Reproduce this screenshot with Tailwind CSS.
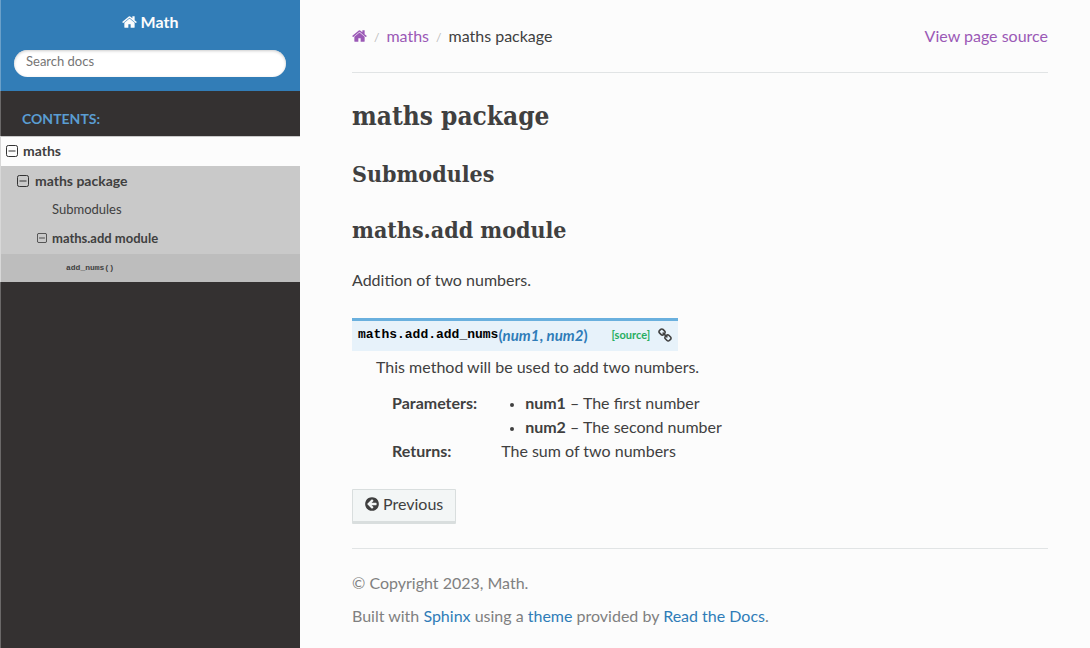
<!DOCTYPE html>
<html lang="en">
<head>
<meta charset="utf-8">
<meta name="viewport" content="width=device-width, initial-scale=1">
<title>maths package — Math documentation</title>
<script src="https://cdn.jsdelivr.net/npm/@tailwindcss/browser@4"></script>
</head>
<body class="bg-[#fcfcfc] font-['Lato',sans-serif] text-base leading-6 text-[#404040]">
<svg class="hidden" aria-hidden="true">
  <symbol id="home" viewBox="64 0 1664 1792"><path d="M1472 992v480q0 26-19 45t-45 19h-384v-384h-256v384h-384q-26 0-45-19t-19-45v-480q0-1 .5-3t.5-3l575-474 575 474q1 2 1 6zm223-69l-62 74q-8 9-21 11h-3q-13 0-21-7l-692-577-692 577q-12 8-24 7-13-2-21-11l-62-74q-8-10-7-23.5t11-21.5l719-599q32-26 76-26t76 26l244 204v-195q0-14 9-23t23-9h192q14 0 23 9t9 23v408l219 182q10 8 11 21.5t-7 23.5z"/></symbol>
  <symbol id="minus" viewBox="0 0 12 12"><rect x=".5" y=".5" width="11" height="11" rx="1.8" fill="none" stroke="currentColor"/><path d="M2.5 6h7" stroke="currentColor"/></symbol>
  <symbol id="link" viewBox="64 0 1664 1792"><path d="M1520 1216q0-40-28-68l-208-208q-28-28-68-28-42 0-72 32 3 3 19 18.5t21.5 21.5 15 19 13 25.5 3.5 27.5q0 40-28 68t-68 28q-15 0-27.5-3.5t-25.5-13-19-15-21.5-21.5-18.5-19q-33 31-33 73 0 40 28 68l206 207q27 27 68 27 40 0 68-26l147-146q28-28 28-67zm-703-705q0-40-28-68l-206-207q-28-28-68-28-39 0-68 27l-147 146q-28 28-28 67 0 40 28 68l208 208q27 27 68 27 42 0 72-31-3-3-19-18.5t-21.5-21.5-15-19-13-25.5-3.5-27.5q0-40 28-68t68-28q15 0 27.5 3.5t25.5 13 19 15 21.5 21.5 18.5 19q33-31 33-73zm895 705q0 120-85 203l-147 146q-83 83-203 83-121 0-204-85l-206-207q-83-83-83-203 0-123 88-209l-88-88q-86 88-208 88-120 0-204-84l-208-208q-84-84-84-204t85-203l147-146q83-83 203-83 121 0 204 85l206 207q83 83 83 203 0 123-88 209l88 88q86-88 208-88 120 0 204 84l208 208q84 84 84 204z"/></symbol>
  <symbol id="back" viewBox="128 0 1536 1792"><path d="M1408 960v-128q0-26-19-45t-45-19h-502l189-189q19-19 19-45t-19-45l-91-91q-18-18-45-18t-45 18l-362 362-91 91q-18 18-18 45t18 45l91 91 362 362q18 18 45 18t45-18l91-91q18-18 18-45t-18-45l-189-189h502q26 0 45-19t19-45zm256-64q0 209-103 385.5t-279.5 279.5-385.5 103-385.5-103-279.5-279.5-103-385.5 103-385.5 279.5-279.5 385.5-103 385.5 103 279.5 279.5 103 385.5z"/></symbol>
</svg>
<div class="flex min-h-screen">
  <nav class="w-[300px] shrink-0 bg-[#343131] shadow-[inset_1px_0_0_#6b6969]" aria-label="Main">
    <div class="bg-[#327db7] px-[14px] pt-[10px] pb-[14px] shadow-[inset_1px_0_0_#6ba0c9]">
      <a href="#" class="mx-auto flex w-fit items-center gap-1 font-bold text-[#fcfcfc]"><svg class="h-4 w-[15px] fill-current"><use href="#home"/></svg>Math</a>
      <form class="mt-4">
        <input type="search" aria-label="Search docs" placeholder="Search docs" class="block h-[27px] w-full rounded-full bg-white px-3 pb-[5px] text-[13px] shadow-[inset_0_1px_3px_#ccc] placeholder:text-[#757575]">
      </form>
    </div>
    <p class="px-[22px] pt-3 pb-px text-sm leading-8 font-bold text-[#5a9dd2] uppercase">Contents:</p>
    <ul class="border-l border-[#d8d8d8] bg-[#c9c9c9] text-sm font-bold">
      <li>
        <a href="#" class="flex h-[30px] items-center gap-[5px] border-t border-[#c9c9c9] bg-[#fcfcfc] pb-px pl-[5px]"><svg class="size-3 text-[#333]"><use href="#minus"/></svg>maths</a>
        <ul>
          <li>
            <a href="#" class="flex h-[30px] items-center gap-[6px] pl-4"><svg class="size-3 text-[#333]"><use href="#minus"/></svg>maths package</a>
            <ul class="text-[13px]">
              <li><a href="#" class="flex h-7 items-center pb-px pl-[51px] font-normal">Submodules</a></li>
              <li>
                <a href="#" class="flex h-[30px] items-center gap-[5px] pb-[2px] pl-9"><svg class="size-[10px] text-[#333]"><use href="#minus"/></svg>maths.add module</a>
                <ul class="bg-[#bdbdbd]">
                  <li><a href="#" class="flex h-7 items-center pl-[65px]"><code class="font-['Liberation_Mono',monospace] text-[8px]">add_nums()</code></a></li>
                </ul>
              </li>
            </ul>
          </li>
        </ul>
      </li>
    </ul>
  </nav>
  <div class="max-w-[800px] min-w-0 grow px-[52px] py-6 pr-[42px]">
    <div class="flex justify-between border-b border-[#e1e4e5] pb-6">
      <nav aria-label="Breadcrumb">
        <ol class="flex items-center">
          <li><a href="#" aria-label="Home" class="block text-[#9b59b6]"><svg class="h-4 w-[15px] fill-current"><use href="#home"/></svg></a></li>
          <li class="before:px-[7px] before:text-xs before:text-[#bbb] before:content-['/']"><a href="#" class="text-[#9b59b6]">maths</a></li>
          <li class="before:px-[7px] before:text-xs before:text-[#bbb] before:content-['/']">maths package</li>
        </ol>
      </nav>
      <a href="#" class="text-[#9b59b6]">View page source</a>
    </div>
    <main>
      <h1 class="mt-[25px] font-['Roboto_Slab','DejaVu_Serif_Condensed','DejaVu_Serif',serif] text-[26px] leading-9 font-bold">maths package</h1>
      <h2 class="mt-6 font-['Roboto_Slab','DejaVu_Serif_Condensed','DejaVu_Serif',serif] text-[23px] leading-8 font-bold">Submodules</h2>
      <h2 class="mt-6 font-['Roboto_Slab','DejaVu_Serif_Condensed','DejaVu_Serif',serif] text-[23px] leading-8 font-bold">maths.add module</h2>
      <p class="mt-[22px]">Addition of two numbers.</p>
      <dl class="mt-[26px]">
        <dt class="flex w-fit items-center border-t-3 border-[#6ab0de] bg-[#e7f2fa] px-[6px] pt-1 pb-[6px] text-[15px] leading-5 font-bold text-[#2f7cb8]">
          <code class="font-['Liberation_Mono',monospace] text-[13px] text-black">maths.add.add_nums</code><span>(<em>num1</em>, <em>num2</em>)</span>
          <a href="#" class="ml-6 text-[11px] text-[#27ae60]">[source]</a>
          <a href="#" aria-label="Link to this definition" class="ml-2 text-[#404040]"><svg class="h-[15px] w-[14px] fill-current"><use href="#link"/></svg></a>
        </dt>
        <dd class="mt-1 ml-6">
          <p>This method will be used to add two numbers.</p>
          <dl class="mt-3 ml-4 grid grid-cols-[max-content_1fr] gap-x-6">
            <dt class="font-bold">Parameters:</dt>
            <dd><ul class="ml-6 list-disc marker:text-[13px]"><li><strong>num1</strong> – The first number</li><li><strong>num2</strong> – The second number</li></ul></dd>
            <dt class="font-bold">Returns:</dt>
            <dd>The sum of two numbers</dd>
          </dl>
        </dd>
      </dl>
    </main>
    <footer class="mt-[26px] text-[#808080]">
      <a href="#" class="flex h-[35px] w-fit items-center gap-1 rounded-[1px] border border-b-3 border-[#d9dede] bg-[#f3f6f6] px-3 pb-1 text-[#404040]"><svg class="h-4 w-[14px] fill-current"><use href="#back"/></svg>Previous</a>
      <hr class="mt-6 border-[#e1e4e5]">
      <p class="mt-[22px]">© Copyright 2023, Math.</p>
      <p class="mt-[9px]">Built with <a href="#" class="text-[#2f7cb8]">Sphinx</a> using a <a href="#" class="text-[#2f7cb8]">theme</a> provided by <a href="#" class="text-[#2f7cb8]">Read the Docs</a>.</p>
    </footer>
  </div>
</div>
</body>
</html>
